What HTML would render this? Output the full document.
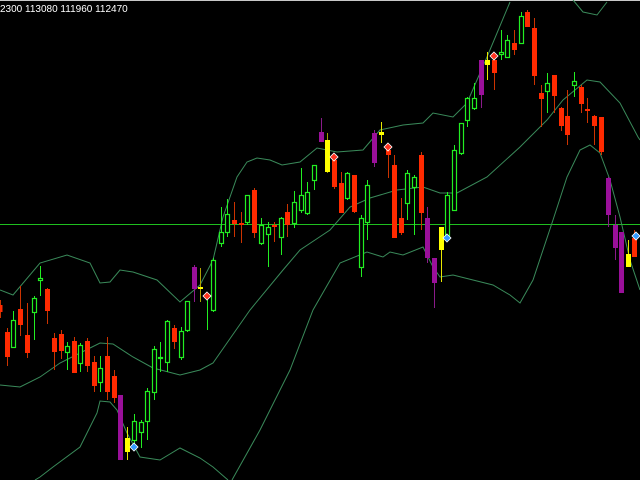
<!DOCTYPE html>
<html><head><meta charset="utf-8"><style>
html,body{margin:0;padding:0;background:#000;width:640px;height:480px;overflow:hidden}
svg{display:block}
.gr line{stroke:#22ee22}
.gr rect{stroke:#22ee22;fill:#000;stroke-width:1.2}
</style></head><body>
<svg width="640" height="480" viewBox="0 0 640 480" xmlns="http://www.w3.org/2000/svg">
<rect width="640" height="480" fill="#000"/>
<rect x="0" y="0" width="640" height="1" fill="#c8c8c8"/>
<text x="0" y="12" fill="#fff" font-family="Liberation Sans, sans-serif" font-size="10">2300 113080 111960 112470</text>
<line x1="0" y1="224.5" x2="640" y2="224.5" stroke="#1fbf1f" stroke-width="1"/>
<g fill="none" stroke="#3a8a5a" stroke-width="1">
<polyline points="0,290 13,295 40,263 67,255 90,263 100,283 110,282 120,270 133,272 157,280 180,302 200,285 213,260 223,217 237,177 247,162 257,158 270,160 282,165 300,162 317,148 337,152 363,150 380,130 403,125 423,123 433,113 453,117 467,103 487,57 510,2"/>
<polyline points="573,0 583,12 597,15 607,2"/>
<polyline points="0,385 20,387 40,377 60,363 80,353 100,343 113,344 133,357 153,368 180,375 200,370 213,363 250,310 283,270 300,250 330,230 350,207 370,198 397,190 423,187 440,193 457,193 487,177 520,147 547,120 563,100 587,80 600,82 620,103 638,137 640,140"/>
<polyline points="35,480 40,477 53,467 80,447 97,413 100,401 110,402 117,410 127,433 140,457 160,460 180,448 200,458 213,467 228,480"/>
<polyline points="232,480 260,430 290,370 313,310 340,263 367,252 383,257 390,252 403,255 423,247 433,267 440,277 453,275 473,280 493,285 510,295 520,303 533,280 553,220 567,177 580,150 590,145 600,153 610,180 620,217 630,260 640,290"/>
</g>
<g stroke-width="1">
<g class="gr">
<line x1="13.5" y1="311" x2="13.5" y2="347"/><rect x="11.5" y="320.5" width="4" height="27"/>
<line x1="34.5" y1="296" x2="34.5" y2="340"/><rect x="32.5" y="298.5" width="4" height="14"/>
<line x1="40.5" y1="266" x2="40.5" y2="296"/><rect x="38.5" y="278.5" width="4" height="2"/>
<line x1="67.5" y1="342" x2="67.5" y2="370"/><rect x="65.5" y="346.5" width="4" height="6"/>
<line x1="80.5" y1="343" x2="80.5" y2="372"/><rect x="78.5" y="345.5" width="4" height="18"/>
<line x1="100.5" y1="356" x2="100.5" y2="392"/><rect x="98.5" y="368.5" width="4" height="14"/>
<line x1="134.5" y1="414" x2="134.5" y2="449"/><rect x="132.5" y="421.5" width="4" height="19"/>
<line x1="141.5" y1="420" x2="141.5" y2="448"/><rect x="139.5" y="422.5" width="4" height="10"/>
<line x1="147.5" y1="388" x2="147.5" y2="440"/><rect x="145.5" y="391.5" width="4" height="30"/>
<line x1="154.5" y1="346" x2="154.5" y2="400"/><rect x="152.5" y="349.5" width="4" height="43"/>
<line x1="160.5" y1="342" x2="160.5" y2="372"/><rect x="158.5" y="357.5" width="4" height="1"/>
<line x1="167.5" y1="320" x2="167.5" y2="372"/><rect x="165.5" y="321.5" width="4" height="41"/>
<line x1="181.5" y1="327" x2="181.5" y2="360"/><rect x="179.5" y="331.5" width="4" height="26"/>
<line x1="187.5" y1="301" x2="187.5" y2="332"/><rect x="185.5" y="301.5" width="4" height="29"/>
<line x1="207.5" y1="296" x2="207.5" y2="330"/>
<line x1="213.5" y1="258" x2="213.5" y2="312"/><rect x="211.5" y="260.5" width="4" height="50"/>
<line x1="221.5" y1="207" x2="221.5" y2="247"/><rect x="219.5" y="232.5" width="4" height="11"/>
<line x1="227.5" y1="199" x2="227.5" y2="237"/><rect x="225.5" y="214.5" width="4" height="18"/>
<line x1="247.5" y1="195" x2="247.5" y2="225"/><rect x="245.5" y="195.5" width="4" height="27"/>
<line x1="261.5" y1="218" x2="261.5" y2="245"/><rect x="259.5" y="225.5" width="4" height="18"/>
<line x1="268.5" y1="222" x2="268.5" y2="267"/><rect x="266.5" y="227.5" width="4" height="7"/>
<line x1="281.5" y1="217" x2="281.5" y2="255"/><rect x="279.5" y="218.5" width="4" height="19"/>
<line x1="294.5" y1="191" x2="294.5" y2="228"/><rect x="292.5" y="202.5" width="4" height="21"/>
<line x1="301.5" y1="168" x2="301.5" y2="213"/><rect x="299.5" y="195.5" width="4" height="15"/>
<line x1="307.5" y1="182" x2="307.5" y2="215"/><rect x="305.5" y="192.5" width="4" height="21"/>
<line x1="314.5" y1="165" x2="314.5" y2="190"/><rect x="312.5" y="165.5" width="4" height="15"/>
<line x1="347.5" y1="172" x2="347.5" y2="200"/><rect x="345.5" y="173.5" width="4" height="25"/>
<line x1="361.5" y1="215" x2="361.5" y2="277"/><rect x="359.5" y="218.5" width="4" height="49"/>
<line x1="367.5" y1="180" x2="367.5" y2="240"/><rect x="365.5" y="185.5" width="4" height="37"/>
<line x1="407.5" y1="170" x2="407.5" y2="220"/><rect x="405.5" y="173.5" width="4" height="30"/>
<line x1="414.5" y1="175" x2="414.5" y2="235"/><rect x="412.5" y="177.5" width="4" height="10"/>
<line x1="447.5" y1="192" x2="447.5" y2="240"/><rect x="445.5" y="195.5" width="4" height="40"/>
<line x1="454.5" y1="145" x2="454.5" y2="210"/><rect x="452.5" y="150.5" width="4" height="60"/>
<line x1="461.5" y1="123" x2="461.5" y2="155"/><rect x="459.5" y="123.5" width="4" height="30"/>
<line x1="467.5" y1="97" x2="467.5" y2="127"/><rect x="465.5" y="98.5" width="4" height="22"/>
<line x1="474.5" y1="83" x2="474.5" y2="110"/><rect x="472.5" y="98.5" width="4" height="10"/>
<line x1="501.5" y1="30" x2="501.5" y2="60"/><rect x="499.5" y="52.5" width="4" height="2"/>
<line x1="507.5" y1="35" x2="507.5" y2="58"/><rect x="505.5" y="40.5" width="4" height="17"/>
<line x1="521.5" y1="12" x2="521.5" y2="43"/><rect x="519.5" y="16.5" width="4" height="27"/>
<line x1="547.5" y1="73" x2="547.5" y2="113"/><rect x="545.5" y="83.5" width="4" height="8"/>
<line x1="574.5" y1="72" x2="574.5" y2="97"/><rect x="572.5" y="81.5" width="4" height="4"/>
</g>
<g stroke="#cc3300" fill="#ff2a00">
<line x1="0.5" y1="300" x2="0.5" y2="318"/><rect x="-1.5" y="305" width="4" height="7" stroke="none"/>
<line x1="7.5" y1="328" x2="7.5" y2="366"/><rect x="5" y="332" width="5" height="25" stroke="none"/>
<line x1="20.5" y1="286" x2="20.5" y2="336"/><rect x="18" y="309" width="5" height="16" stroke="none"/>
<line x1="27.5" y1="303" x2="27.5" y2="358"/><rect x="25" y="335" width="5" height="18" stroke="none"/>
<line x1="47.5" y1="288" x2="47.5" y2="324"/><rect x="45" y="289" width="5" height="22" stroke="none"/>
<line x1="54.5" y1="333" x2="54.5" y2="370"/><rect x="52" y="338" width="5" height="14" stroke="none"/>
<line x1="61.5" y1="330" x2="61.5" y2="359"/><rect x="59" y="334" width="5" height="17" stroke="none"/>
<line x1="74.5" y1="337" x2="74.5" y2="373"/><rect x="72" y="341" width="5" height="32" stroke="none"/>
<line x1="87.5" y1="338" x2="87.5" y2="372"/><rect x="85" y="341" width="5" height="25" stroke="none"/>
<line x1="94.5" y1="356" x2="94.5" y2="392"/><rect x="92" y="362" width="5" height="24" stroke="none"/>
<line x1="107.5" y1="337" x2="107.5" y2="400"/><rect x="105" y="356" width="5" height="36" stroke="none"/>
<line x1="114.5" y1="370" x2="114.5" y2="403"/><rect x="112" y="376" width="5" height="22" stroke="none"/>
<line x1="174.5" y1="325" x2="174.5" y2="349"/><rect x="172" y="328" width="5" height="14" stroke="none"/>
<line x1="234.5" y1="202" x2="234.5" y2="237"/><rect x="232" y="220" width="5" height="4" stroke="none"/>
<line x1="241.5" y1="212" x2="241.5" y2="243"/><rect x="239" y="223" width="5" height="2" stroke="none"/>
<line x1="254.5" y1="188" x2="254.5" y2="238"/><rect x="252" y="190" width="5" height="43" stroke="none"/>
<line x1="274.5" y1="222" x2="274.5" y2="242"/><rect x="272" y="225" width="5" height="2" stroke="none"/>
<line x1="287.5" y1="204" x2="287.5" y2="237"/><rect x="285" y="212" width="5" height="13" stroke="none"/>
<line x1="334.5" y1="157" x2="334.5" y2="189"/><rect x="332" y="160" width="5" height="27" stroke="none"/>
<line x1="341.5" y1="172" x2="341.5" y2="213"/><rect x="339" y="183" width="5" height="30" stroke="none"/>
<line x1="354.5" y1="175" x2="354.5" y2="213"/><rect x="352" y="175" width="5" height="37" stroke="none"/>
<line x1="388.5" y1="147" x2="388.5" y2="178"/><rect x="386" y="150" width="5" height="5" stroke="none"/>
<line x1="394.5" y1="155" x2="394.5" y2="238"/><rect x="392" y="165" width="5" height="73" stroke="none"/>
<line x1="401.5" y1="198" x2="401.5" y2="235"/><rect x="399" y="218" width="5" height="15" stroke="none"/>
<line x1="421.5" y1="152" x2="421.5" y2="230"/><rect x="419" y="155" width="5" height="58" stroke="none"/>
<line x1="494.5" y1="53" x2="494.5" y2="90"/><rect x="492" y="60" width="5" height="13" stroke="none"/>
<line x1="514.5" y1="30" x2="514.5" y2="55"/><rect x="512" y="43" width="5" height="7" stroke="none"/>
<line x1="527.5" y1="10" x2="527.5" y2="27"/><rect x="525" y="12" width="5" height="15" stroke="none"/>
<line x1="534.5" y1="18" x2="534.5" y2="85"/><rect x="532" y="28" width="5" height="48" stroke="none"/>
<line x1="541.5" y1="85" x2="541.5" y2="127"/><rect x="539" y="93" width="5" height="6" stroke="none"/>
<line x1="554.5" y1="75" x2="554.5" y2="113"/><rect x="552" y="75" width="5" height="21" stroke="none"/>
<line x1="561.5" y1="107" x2="561.5" y2="131"/><rect x="559" y="108" width="5" height="18" stroke="none"/>
<line x1="567.5" y1="90" x2="567.5" y2="145"/><rect x="565" y="116" width="5" height="19" stroke="none"/>
<line x1="581.5" y1="85" x2="581.5" y2="113"/><rect x="579" y="87" width="5" height="17" stroke="none"/>
<line x1="587.5" y1="98" x2="587.5" y2="123"/><rect x="585" y="109" width="5" height="2" stroke="none"/>
<line x1="594.5" y1="115" x2="594.5" y2="145"/><rect x="592" y="116" width="5" height="10" stroke="none"/>
<line x1="601.5" y1="117" x2="601.5" y2="155"/><rect x="599" y="117" width="5" height="35" stroke="none"/>
<line x1="634.5" y1="230" x2="634.5" y2="257"/><rect x="632" y="238" width="5" height="19" stroke="none"/>
</g>
<g stroke="#8a1a8a" fill="#9a109a">
<line x1="120.5" y1="395" x2="120.5" y2="460"/><rect x="118" y="395" width="5" height="65" stroke="none"/>
<line x1="194.5" y1="265" x2="194.5" y2="302"/><rect x="192" y="267" width="5" height="22" stroke="none"/>
<line x1="321.5" y1="118" x2="321.5" y2="142"/><rect x="319" y="132" width="5" height="10" stroke="none"/>
<line x1="374.5" y1="130" x2="374.5" y2="167"/><rect x="372" y="133" width="5" height="30" stroke="none"/>
<line x1="427.5" y1="207" x2="427.5" y2="263"/><rect x="425" y="218" width="5" height="40" stroke="none"/>
<line x1="434.5" y1="258" x2="434.5" y2="308"/><rect x="432" y="258" width="5" height="25" stroke="none"/>
<line x1="481.5" y1="60" x2="481.5" y2="108"/><rect x="479" y="60" width="5" height="35" stroke="none"/>
<line x1="608.5" y1="177" x2="608.5" y2="227"/><rect x="606" y="178" width="5" height="37" stroke="none"/>
<line x1="615.5" y1="215" x2="615.5" y2="260"/><rect x="613" y="225" width="5" height="23" stroke="none"/>
<rect x="619" y="232" width="5" height="61" stroke="none"/>
</g>
<g stroke="#e8e800" fill="#ffff00">
<line x1="127.5" y1="427" x2="127.5" y2="460"/><rect x="125" y="438" width="5" height="14" stroke="none"/>
<line x1="200.5" y1="268" x2="200.5" y2="302" stroke="#b0a000"/><rect x="198" y="287" width="5" height="2" stroke="none"/>
<line x1="327.5" y1="133" x2="327.5" y2="173" stroke="#a0a000"/><rect x="325" y="140" width="5" height="32" stroke="none"/>
<line x1="381.5" y1="122" x2="381.5" y2="143"/><rect x="379" y="132" width="5" height="3" stroke="none"/>
<line x1="441.5" y1="227" x2="441.5" y2="282"/><rect x="439" y="227" width="5" height="23" stroke="none"/>
<line x1="487.5" y1="52" x2="487.5" y2="80"/><rect x="485" y="60" width="5" height="5" stroke="none"/>
<line x1="628.5" y1="240" x2="628.5" y2="267"/><rect x="626" y="254" width="5" height="13" stroke="none"/>
</g>
</g>
<g>
<path d="M134 443 L138 447 L134 451 L130 447Z" fill="#3399ff" stroke="#fff" stroke-width="0.8"/>
<path d="M447 234 L451 238 L447 242 L443 238Z" fill="#3399ff" stroke="#fff" stroke-width="0.8"/>
<path d="M636 232 L640 236 L636 240 L632 236Z" fill="#3399ff" stroke="#fff" stroke-width="0.8"/>
<path d="M207 292 L211 296 L207 300 L203 296Z" fill="#ff3322" stroke="#fff" stroke-width="0.8"/>
<path d="M334 153 L338 157 L334 161 L330 157Z" fill="#ff3322" stroke="#fff" stroke-width="0.8"/>
<path d="M388 143 L392 147 L388 151 L384 147Z" fill="#ff3322" stroke="#fff" stroke-width="0.8"/>
<path d="M494 52 L498 56 L494 60 L490 56Z" fill="#ff3322" stroke="#fff" stroke-width="0.8"/>
</g>
</svg>
</body></html>
